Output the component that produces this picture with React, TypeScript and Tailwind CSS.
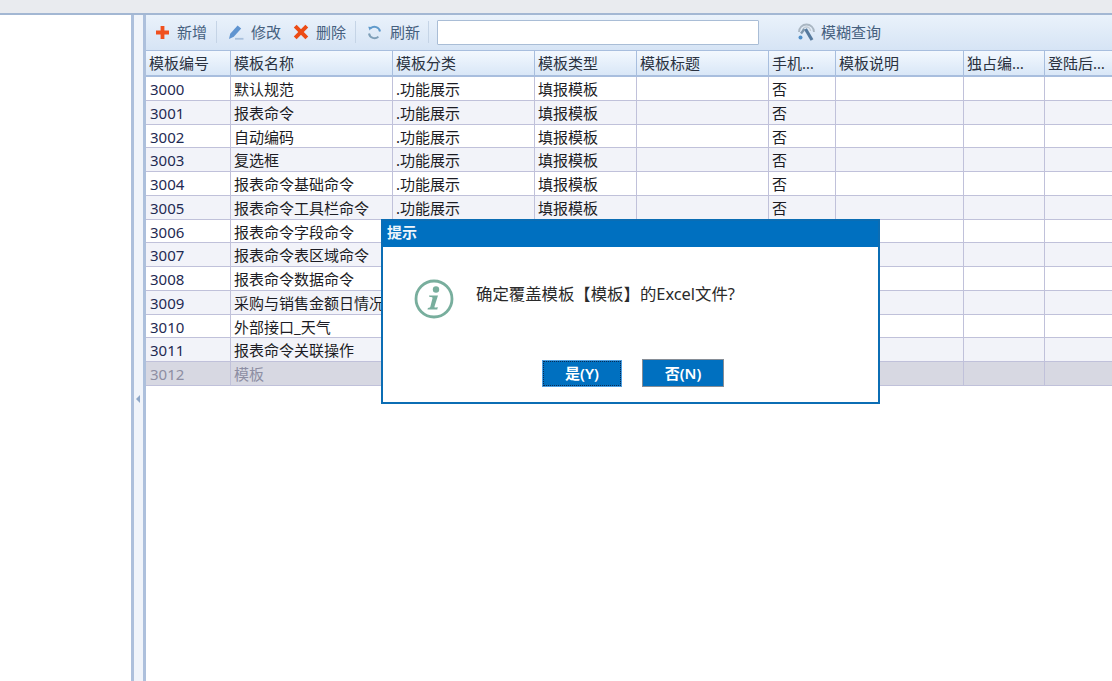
const font = { fontFamily: '"Noto Sans", "Noto Sans CJK SC", sans-serif' };

const columns = [
  { title: '模板编号', width: 'w-[85px]' },
  { title: '模板名称', width: 'w-[162px]' },
  { title: '模板分类', width: 'w-[142px]' },
  { title: '模板类型', width: 'w-[102px]' },
  { title: '模板标题', width: 'w-[132px]' },
  { title: '手机…', width: 'w-[67px]' },
  { title: '模板说明', width: 'w-[128px]' },
  { title: '独占编…', width: 'w-[81px]' },
  { title: '登陆后…', width: 'w-[68px]' },
];

const rows = [
  ['3000', '默认规范'],
  ['3001', '报表命令'],
  ['3002', '自动编码'],
  ['3003', '复选框'],
  ['3004', '报表命令基础命令'],
  ['3005', '报表命令工具栏命令'],
  ['3006', '报表命令字段命令'],
  ['3007', '报表命令表区域命令'],
  ['3008', '报表命令数据命令'],
  ['3009', '采购与销售金额日情况'],
  ['3010', '外部接口_天气'],
  ['3011', '报表命令关联操作'],
  ['3012', '模板'],
];

function PlusIcon() {
  return (
    <svg width="15" height="15" viewBox="0 0 15 15">
      <path d="M5.6 1h3.8v4.6H14v3.8H9.4V14H5.6V9.4H1V5.6h4.6z" fill="#f0501e" />
    </svg>
  );
}

function PencilIcon() {
  return (
    <svg width="16" height="17" viewBox="0 0 16 17">
      <path d="M1 15 2.2 9.8 9.6 1.5l3.6 3-7.4 8.2z" fill="#5f94d0" />
      <path d="M7 14.8h8.5" stroke="#a8c0dc" strokeWidth="1.8" />
    </svg>
  );
}

function CrossIcon() {
  return (
    <svg width="16" height="16" viewBox="0 0 16 16">
      <path d="M2.2 2.2l11.6 11.6M13.8 2.2 2.2 13.8" stroke="#ec4c16" strokeWidth="4" />
    </svg>
  );
}

function RefreshIcon() {
  return (
    <svg width="15" height="15" viewBox="0 0 15 15" fill="none">
      <path d="M13 6.5A5.6 5.6 0 0 0 3.6 3.4" stroke="#5f9acb" strokeWidth="2" />
      <path d="M2 8.5a5.6 5.6 0 0 0 9.4 3.1" stroke="#7f9fb8" strokeWidth="2" />
      <path d="M1.2 1.8 5.4 2 2.6 5.6z" fill="#5f9acb" />
    </svg>
  );
}

function SearchToolIcon() {
  return (
    <svg width="19" height="20" viewBox="0 0 19 20" fill="none">
      <path d="M2 10A7.5 7.5 0 0 1 17 10" stroke="#a9b6c2" strokeWidth="1.8" />
      <path d="M5.5 9A4 4 0 0 1 13.5 9" stroke="#c3ccd4" strokeWidth="1.4" />
      <path d="M8.5 7 15 18" stroke="#567a9e" strokeWidth="3.2" />
      <path d="M7.5 7 4 11.5" stroke="#7f97ad" strokeWidth="2.4" />
      <circle cx="3.5" cy="15.5" r="2" fill="#4f8fc8" />
    </svg>
  );
}

function InfoIcon() {
  return (
    <svg width="40" height="40" viewBox="0 0 40 40" fill="none">
      <circle cx="20" cy="20" r="18" stroke="#78ae9d" strokeWidth="2.8" />
      <circle cx="22" cy="10.5" r="3.2" fill="#78ae9d" />
      <path d="M15 16.5h9L20.5 27.5c-.3 1.2.5 1.4 3.2.4l-.4 2.6H13.5l.4-1.6c1.6 0 2.2-.3 2.5-1.4l2.1-8.2c.2-1-.4-1.3-3-1.3z" fill="#78ae9d" />
    </svg>
  );
}

function Separator() {
  return <div className="h-[22px] w-px bg-[#c5d4e6]" />;
}

function ToolLabel({ children }: { children: string }) {
  return <span className="text-[15px] leading-5 text-[#45607e]">{children}</span>;
}

function Toolbar() {
  return (
    <div className="flex h-[35px] items-center bg-gradient-to-b from-[#eaf2fb] to-[#d6e4f5] pb-[1px] pl-[9px]">
      <PlusIcon />
      <span className="ml-[7px]"><ToolLabel>新增</ToolLabel></span>
      <div className="ml-[9px] mr-[11px]"><Separator /></div>
      <PencilIcon />
      <span className="ml-[7px]"><ToolLabel>修改</ToolLabel></span>
      <div className="ml-3 flex"><CrossIcon /></div>
      <span className="ml-[7px]"><ToolLabel>删除</ToolLabel></span>
      <div className="ml-[9px] mr-[11px]"><Separator /></div>
      <RefreshIcon />
      <span className="ml-2"><ToolLabel>刷新</ToolLabel></span>
      <div className="ml-2 mr-2"><Separator /></div>
      <div className="mt-[1px] h-[25px] w-[322px] rounded-[1px] border border-[#a9bdd6] bg-white" />
      <div className="ml-[38px] flex"><SearchToolIcon /></div>
      <span className="ml-[5px]"><ToolLabel>模糊查询</ToolLabel></span>
    </div>
  );
}

function Grid() {
  return (
    <div className="text-[15px] text-[#1c1c24]">
      <div className="flex h-[27px] border-b-2 border-t border-[#a8bede] bg-gradient-to-b from-[#f3f8fe] to-[#d9e7f7]">
        {columns.map((col) => (
          <div key={col.title} className={`${col.width} shrink-0 truncate border-r border-[#a8bede] pl-[3px] leading-[24px] text-[#2a3240]`}>
            {col.title}
          </div>
        ))}
      </div>
      {rows.map((row, i) => {
        const isLast = i === rows.length - 1;
        const rowBg = isLast ? 'bg-[#d7d8e2] text-[#8d8ea3]' : i % 2 === 0 ? 'bg-white' : 'bg-[#f2f3f9]';
        return (
          <div key={row[0]} className={`flex h-[23.75px] border-b border-[#c0c1da] ${rowBg}`}>
            {columns.map((col, c) => (
              <div key={col.title} className={`${col.width} shrink-0 overflow-hidden whitespace-nowrap border-r border-[#c0c1da] pl-[3px] leading-[24px]`}>
                {c === 0 && <span className={isLast ? 'ml-px' : 'ml-px text-[#1e2a52]'}>{row[0]}</span>}
                {c === 1 && row[1]}
                {c === 2 && !isLast && '.功能展示'}
                {c === 3 && !isLast && '填报模板'}
                {c === 5 && !isLast && '否'}
              </div>
            ))}
          </div>
        );
      })}
    </div>
  );
}

function Dialog() {
  return (
    <div className="absolute left-[381px] top-[219px] flex h-[185px] w-[499px] flex-col border-2 border-[#0b6db4] bg-white">
      <div className="flex h-[26px] shrink-0 items-start bg-[#0070c0] pl-1 text-[15px] font-bold leading-[23px] text-[#eef5fb]">
        提示
      </div>
      <div className="flex flex-1 flex-col">
        <div className="flex items-start pl-[31px] pt-[32px]">
          <InfoIcon />
          <span className="ml-[22px] text-[16.4px] leading-[30px] text-[#2a2a2a]">确定覆盖模板【模板】的Excel文件?</span>
        </div>
        <div className="mt-[40px] flex items-center pl-[160px]">
          <button className="h-[25px] w-[78px] border border-dotted border-[#0a2a50] bg-[#0070c0] text-[15px] font-semibold leading-none text-white outline outline-1 outline-[#4f9fe0]">
            是(Y)
          </button>
          <button className="ml-[21px] h-[28px] w-[82px] border border-[#868d96] bg-[#0070c0] text-[15px] font-semibold leading-none text-white">
            否(N)
          </button>
        </div>
      </div>
    </div>
  );
}

export default function App() {
  return (
    <div className="relative h-[681px] w-[1112px] overflow-hidden bg-white" style={font}>
      <div className="h-[13px] bg-[#e9ebef]" />
      <div className="flex h-[668px] border-t-2 border-[#a3b7d3]">
        <div className="w-[134px] shrink-0 border-r-[3px] border-[#adc0dc] bg-white" />
        <div className="flex w-[9px] shrink-0 items-center justify-start bg-[#f0f4fa] pl-[2px]">
          <div className="mt-[102px] h-0 w-0 border-y-[4px] border-r-[4px] border-y-transparent border-r-[#8fa8c8]" />
        </div>
        <div className="min-w-0 flex-1 border-l-[3px] border-[#adc0dc] bg-white">
          <Toolbar />
          <Grid />
        </div>
      </div>
      <Dialog />
    </div>
  );
}
